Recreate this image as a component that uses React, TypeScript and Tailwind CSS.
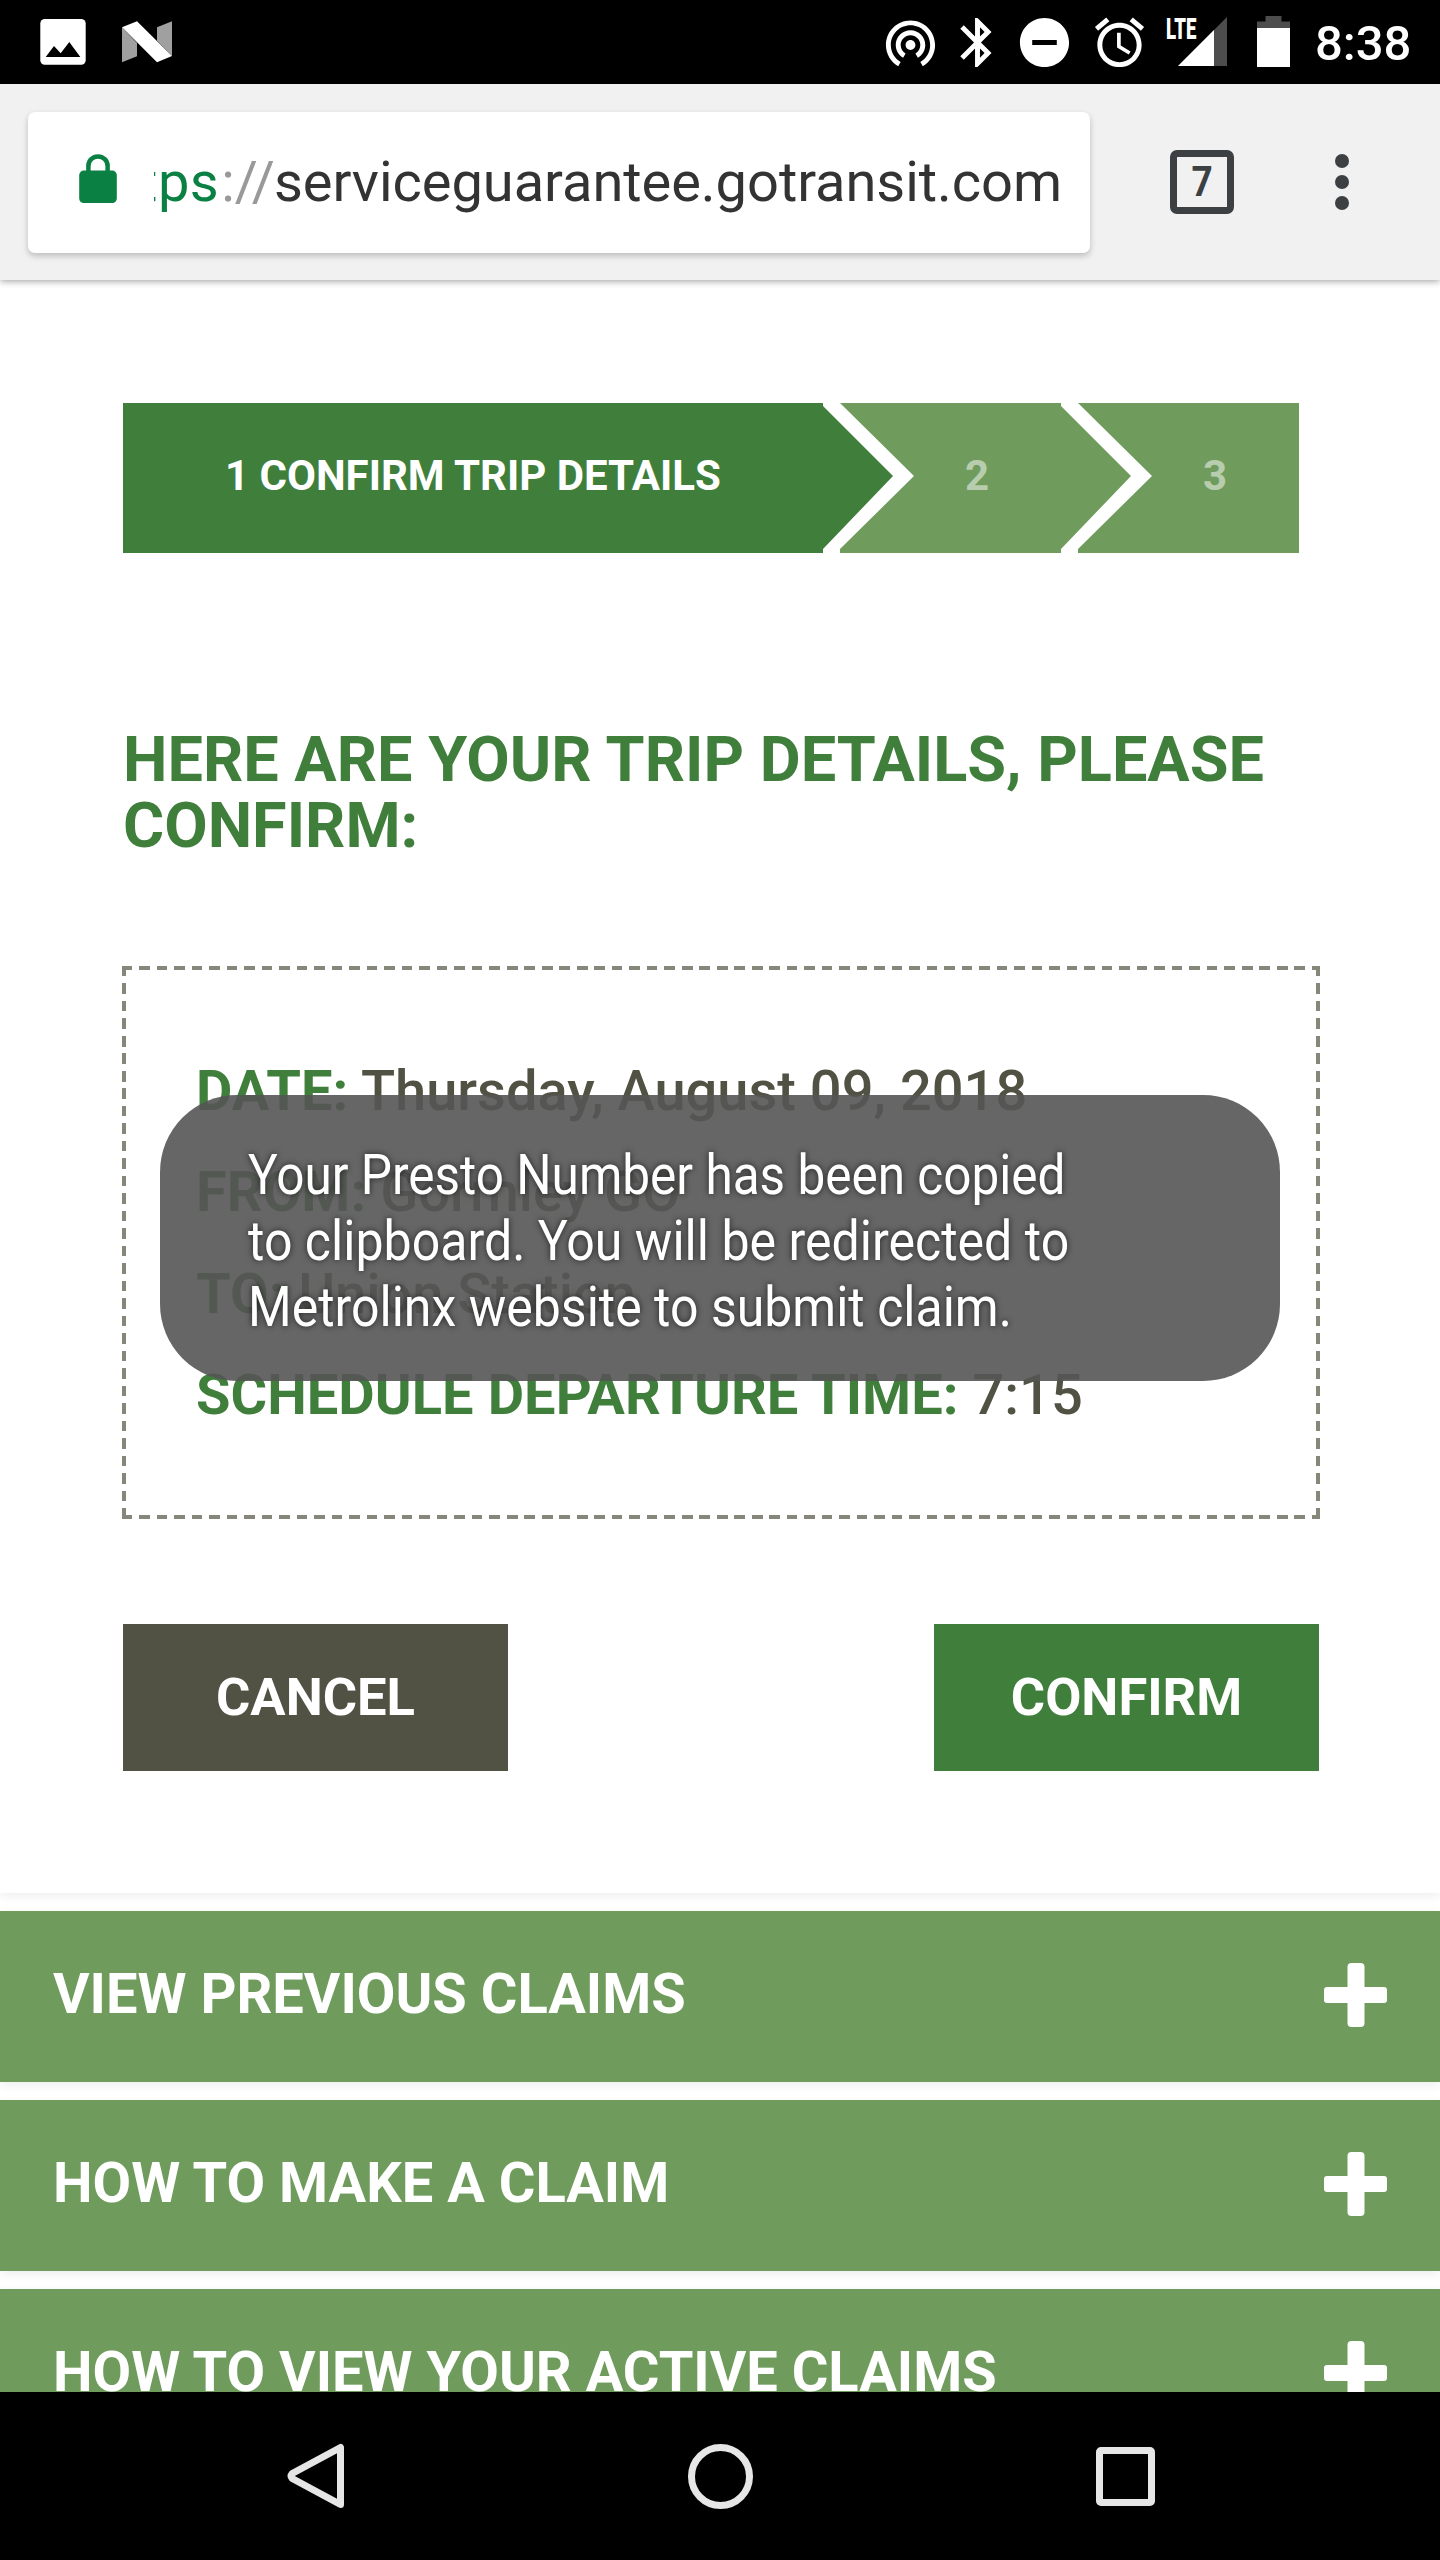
import React from "react";

interface TripDetail {
    label: string;
    value: string;
}

const tripDetails: TripDetail[] = [
    { label: "DATE:", value: "Thursday, August 09, 2018" },
    { label: "FROM:", value: "Gormley GO" },
    { label: "TO:", value: "Union Station" },
    { label: "SCHEDULE DEPARTURE TIME:", value: "7:15" },
];

const sections = [
    "VIEW PREVIOUS CLAIMS",
    "HOW TO MAKE A CLAIM",
    "HOW TO VIEW YOUR ACTIVE CLAIMS",
];

const StatusIcon: React.FC<{ d: string; className?: string }> = ({ d, className }) => (
    <svg viewBox="0 0 24 24" className={`h-[59px] w-[59px] shrink-0 fill-white ${className ?? ""}`}>
        <path d={d} />
    </svg>
);

const StatusBar: React.FC = () => (
    <div className="flex h-[84px] shrink-0 items-start bg-black text-white">
        <svg viewBox="0 0 46 46" className="mt-[19px] ml-10 h-[46px] w-[46px] shrink-0">
            <rect x="0.3" width="45.4" height="45.7" rx="4.5" fill="#fff" />
            <path d="M5.7 38 14 27l6.7 7.3L29.3 23l11 15z" fill="#000" />
        </svg>
        <svg viewBox="0 0 50 42" className="mt-[21px] ml-9 h-[42px] w-[50px] shrink-0">
            <path d="M0 6.3 15 22v13.3L0 41.3zM35 6.3l15-6V35L35 19.7z" fill="#a0a0a0" />
            <path d="M0 6.3 15 .3 50 35l-15 6.3z" fill="#fff" />
        </svg>
        <div className="ml-[709px] flex items-start pt-[13px]">
            <StatusIcon d="M12 11c-1.1 0-2 .9-2 2s.9 2 2 2 2-.9 2-2-.9-2-2-2zm6 2c0-3.31-2.69-6-6-6s-6 2.69-6 6c0 2.22 1.21 4.15 3 5.19l1-1.74c-1.19-.7-2-1.97-2-3.45 0-2.21 1.79-4 4-4s4 1.79 4 4c0 1.48-.81 2.75-2 3.45l1 1.74c1.79-1.04 3-2.97 3-5.19zM12 3C6.48 3 2 7.48 2 13c0 3.7 2.01 6.92 4.99 8.65l1-1.73C5.61 18.53 4 15.96 4 13c0-4.42 3.58-8 8-8s8 3.58 8 8c0 2.96-1.61 5.53-4 6.92l1 1.73c2.99-1.73 5-4.95 5-8.65 0-5.52-4.48-10-10-10z" />
            <StatusIcon
                className="ml-2"
                d="M17.71 7.71L12 2h-1v7.59L6.41 5 5 6.41 10.59 12 5 17.59 6.41 19 11 14.41V22h1l5.71-5.71-4.3-4.29 4.3-4.29zM13 5.83l1.88 1.88L13 9.59V5.83zm1.88 10.46L13 18.17v-3.76l1.88 1.88z"
            />
            <StatusIcon
                className="ml-2"
                d="M12 2C6.48 2 2 6.48 2 12s4.48 10 10 10 10-4.48 10-10S17.52 2 12 2zm5 11H7v-2h10v2z"
            />
            <StatusIcon
                className="ml-4"
                d="M22 5.72l-4.6-3.86-1.29 1.53 4.6 3.86L22 5.72zM7.88 3.39L6.6 1.86 2 5.71l1.29 1.53 4.59-3.85zM12.5 8H11v6l4.75 2.85.75-1.23-4-2.37V8zM12 4c-4.97 0-9 4.03-9 9s4.02 9 9 9c4.97 0 9-4.03 9-9s-4.03-9-9-9zm0 16c-3.87 0-7-3.13-7-7s3.13-7 7-7 7 3.13 7 7-3.13 7-7 7z"
            />
        </div>
        <div className="relative mt-[17px] ml-[29px] h-[49px] w-[49px] shrink-0">
            <svg viewBox="0 0 49 49" className="h-[49px] w-[49px]">
                <path d="M0 49 49 0v49z" fill="#4d4d4d" />
                <path d="M0 49 36 13v36z" fill="#fff" />
            </svg>
            <span className="absolute top-[-3px] left-[-12px] origin-left scale-x-[0.62] text-[30px] leading-[30px] font-black">
                LTE
            </span>
        </div>
        <svg viewBox="0 0 33 51" className="mt-4 ml-[30px] h-[51px] w-[33px] shrink-0">
            <path d="M0 5.5h8.5V0h16v5.5H33V12H0z" fill="#4d4d4d" />
            <path d="M0 12h33v39H0z" fill="#fff" />
        </svg>
        <span className="mt-[14px] ml-[25px] text-[49px] leading-[60px] font-medium">8:38</span>
    </div>
);

const BrowserBar: React.FC = () => (
    <div className="z-10 flex h-[196px] shrink-0 items-center bg-[#f1f1f1] shadow-[0_1px_7px_rgba(0,0,0,0.4)]">
        <div className="ml-7 flex h-[141px] w-[1062px] items-center rounded-[7px] bg-white shadow-[0_3px_6px_rgba(0,0,0,0.22)]">
            <svg viewBox="0 0 38 49" className="mb-[7px] ml-[51px] h-[49px] w-[38px] shrink-0">
                <rect y="16.6" x="0.2" width="37.6" height="32.4" rx="4.5" fill="#0b8043" />
                <path
                    d="M9.4 18v-6a9.6 9.6 0 0 1 19.2 0v6"
                    fill="none"
                    stroke="#0b8043"
                    strokeWidth="4.5"
                />
            </svg>
            <div className="ml-[37px] flex w-[908px] justify-end overflow-hidden text-[56px] leading-[76px] whitespace-pre text-[#333]">
                {/* scrolled to the end of the host, so the scheme is clipped */}
                <span className="mr-[2px] tracking-[0.5px] text-[#0b8043]">https</span>
                <span className="mr-[-1px] text-[#999]">://</span>
                <span className="tracking-[-0.04px]">serviceguarantee.gotransit.com</span>
            </div>
        </div>
        <div className="ml-20 flex h-16 w-16 items-center justify-center rounded-[7px] border-7 border-[#3c4043]">
            <span className="scale-x-[0.88] text-[42px] leading-[50px] font-bold text-[#3c4043]">7</span>
        </div>
        <svg viewBox="0 0 14 56" className="ml-[101px] h-14 w-[14px] fill-[#3c4043]">
            <circle cx="7" cy="7" r="7" />
            <circle cx="7" cy="28" r="7" />
            <circle cx="7" cy="49" r="7" />
        </svg>
    </div>
);

const Steps: React.FC = () => (
    <div className="ml-px flex h-[150px] text-[42px] leading-[146px] font-bold">
        <div className="w-[770px] bg-[#3f7f3b] pl-[102px] text-white [clip-path:polygon(0_0,700px_0,700px_3px,100%_73px,700px_146px,700px_100%,0_100%)]">
            1 CONFIRM TRIP DETAILS
        </div>
        <div className="ml-[-53px] w-[291px] bg-[#6f9c5d] pl-[125px] text-white/50 [clip-path:polygon(0_0,221px_0,221px_3px,100%_73px,221px_146px,221px_100%,0_100%,0_146px,74px_73px)]">
            2
        </div>
        <div className="ml-[-53px] w-[221px] bg-[#6f9c5d] pl-[125px] text-white/50 [clip-path:polygon(0_0,100%_0,100%_100%,0_100%,0_146px,74px_73px)]">
            3
        </div>
    </div>
);

const Toast: React.FC = () => (
    <div className="absolute top-[129px] left-[38px] h-[286px] w-[1120px] rounded-[77px] bg-[#555]/90 pt-[47px] pl-[88px] text-[56px] leading-[66px] whitespace-nowrap text-white [text-shadow:0_0_7px_rgba(0,0,0,0.7)]">
        <p className="origin-left scale-x-[0.884]">Your Presto Number has been copied</p>
        <p className="origin-left scale-x-[0.894]">to clipboard. You will be redirected to</p>
        <p className="origin-left scale-x-[0.893]">Metrolinx website to submit claim.</p>
    </div>
);

const TripCard: React.FC = () => (
    <div className="relative mt-[107px] h-[553px] w-[1198px] pt-[75px] pl-[74px]">
        {/* dashed frame, 10.5px dashes with 7px gaps */}
        <div className="absolute inset-x-0 top-0 h-1 bg-[repeating-linear-gradient(90deg,#86867b_0_10.5px,transparent_10.5px_17.5px)]" />
        <div className="absolute inset-x-0 bottom-0 h-1 bg-[repeating-linear-gradient(90deg,#86867b_0_10.5px,transparent_10.5px_17.5px)]" />
        <div className="absolute inset-y-0 left-0 w-1 bg-[repeating-linear-gradient(180deg,#86867b_0_10.5px,transparent_10.5px_17.5px)]" />
        <div className="absolute inset-y-0 right-0 w-1 bg-[repeating-linear-gradient(180deg,#86867b_0_10.5px,transparent_10.5px_17.5px)]" />
        {tripDetails.map((item) => (
            <p key={item.label} className="text-[56px] leading-[101.4px] font-medium whitespace-nowrap text-[#525244]">
                <span className="font-bold tracking-[0.05px] text-[#3f7f3b]">{item.label}</span> {item.value}
            </p>
        ))}
        <Toast />
    </div>
);

const Section: React.FC<{ title: string }> = ({ title }) => (
    <div className="mb-[17.7px] flex h-[171.3px] shrink-0 items-center justify-between bg-[#6f9c5d] pr-[53px] pb-[3px] pl-[53px] shadow-[0_3px_10px_rgba(0,0,0,0.07)]">
        <span className="mb-[3px] text-[56px] leading-[66px] font-bold text-white">{title}</span>
        <svg viewBox="0 0 64 64" className="h-16 w-16 fill-white">
            <rect x="24.5" width="17" height="64" rx="4" />
            <rect x="1" y="24" width="63" height="16" rx="3" />
        </svg>
    </div>
);

const NavBar: React.FC = () => (
    <div className="flex h-[168px] shrink-0 items-center bg-black">
        <svg viewBox="0 0 58 66" className="ml-[287px] h-[66px] w-[58px]">
            <path
                d="M53.5 4.5v57L5.2 35.5q-2.2-2.5 0-5z"
                fill="none"
                stroke="#e6e6e6"
                strokeWidth="7"
                strokeLinejoin="round"
            />
        </svg>
        <div className="ml-[343px] h-[65px] w-[65px] rounded-full border-7 border-[#e6e6e6]" />
        <div className="ml-[343px] h-[59px] w-[59px] rounded-[5px] border-7 border-[#e6e6e6]" />
    </div>
);

export default function App() {
    return (
        <div className="flex h-[2560px] w-[1440px] flex-col overflow-hidden bg-white font-[Roboto,sans-serif]">
            <StatusBar />
            <BrowserBar />
            <div className="flex h-[2112px] flex-col overflow-hidden bg-white">
                <div className="mb-[18px] h-[1613px] shrink-0 bg-white pt-[123px] pl-[122px] shadow-[0_3px_10px_rgba(0,0,0,0.07)]">
                    <Steps />
                    <h1 className="mt-[174px] pl-px text-[63px] leading-[66px] font-bold whitespace-nowrap text-[#3f7f3b]">
                        HERE ARE YOUR TRIP DETAILS, PLEASE
                        <br />
                        CONFIRM:
                    </h1>
                    <TripCard />
                    <div className="mt-[105px] ml-px flex w-[1196px] justify-between text-[52.5px] font-bold text-white">
                        <button className="h-[147px] w-[385px] bg-[#525244]">CANCEL</button>
                        <button className="h-[147px] w-[385px] bg-[#3f7f3b]">CONFIRM</button>
                    </div>
                </div>
                {sections.map((title) => (
                    <Section key={title} title={title} />
                ))}
            </div>
            <NavBar />
        </div>
    );
}
